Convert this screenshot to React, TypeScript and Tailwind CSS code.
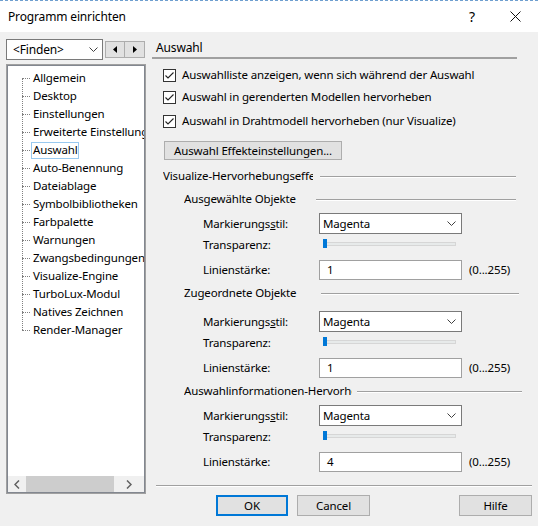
import React from "react";

const treeItems = [
  "Allgemein",
  "Desktop",
  "Einstellungen",
  "Erweiterte Einstellungen",
  "Auswahl",
  "Auto-Benennung",
  "Dateiablage",
  "Symbolbibliotheken",
  "Farbpalette",
  "Warnungen",
  "Zwangsbedingungen",
  "Visualize-Engine",
  "TurboLux-Modul",
  "Natives Zeichnen",
  "Render-Manager",
];

function Chevron() {
  return (
    <svg width="9" height="6" viewBox="0 0 9 6" className="shrink-0">
      <path d="M0.5 0.5 L4.5 4.5 L8.5 0.5" fill="none" stroke="#404040" strokeWidth="1" />
    </svg>
  );
}

function CheckBox({ label }: { label: string }) {
  return (
    <div className="flex items-center h-[16px] ml-[11px]">
      <svg width="13" height="13" viewBox="0 0 13 13" className="shrink-0">
        <rect x="0.5" y="0.5" width="12" height="12" fill="#fff" stroke="#333" />
        <path d="M2.5 6.5 L5 9 L10.5 3.5" fill="none" stroke="#222" strokeWidth="1.1" />
      </svg>
      <span className="ml-[6px] whitespace-nowrap">{label}</span>
    </div>
  );
}

function GroupHeading({
  text,
  left,
  labelWidth,
  gap,
  lineWidth,
}: {
  text: string;
  left: string;
  labelWidth: string;
  gap: string;
  lineWidth: string;
}) {
  return (
    <div className={`flex items-center h-[16px] ${left}`}>
      <span className={`${labelWidth} overflow-hidden whitespace-nowrap shrink-0`}>{text}</span>
      <div className={`${gap} ${lineWidth} h-[2px] border-t border-[#a0a0a0] bg-white mt-[2px]`} />
    </div>
  );
}

function FieldGroup({ value, top }: { value: string; top: string }) {
  return (
    <div className="flex flex-col">
      <div className={`flex items-center h-[21px] ${top}`}>
        <span className="w-[116px] ml-[51px] shrink-0">
          Markierungs<span className="underline">s</span>til:
        </span>
        <div className="w-[143px] h-[21px] bg-white border border-[#7a7a7a] flex items-center justify-between pl-[3px] pr-[5px]">
          <span>Magenta</span>
          <Chevron />
        </div>
      </div>
      <div className="flex items-center h-[16px] mt-[3px]">
        <span className="w-[120px] ml-[51px] shrink-0">Transparenz:</span>
        <div className="relative w-[133px] h-[4px] bg-[#e7eaea] border border-[#d6d6d6] mt-[-2px]">
          <div className="absolute left-[-1px] top-[-4px] w-[4px] h-[9px] bg-[#0078d7]" />
        </div>
      </div>
      <div className="flex items-center h-[20px] mt-[7px]">
        <span className="w-[116px] ml-[51px] shrink-0">Linienstärke:</span>
        <div className="w-[143px] h-[20px] bg-white border border-[#a0a0a0] flex items-center pl-[7px]">
          {value}
        </div>
        <span className="ml-[7px]">(0...255)</span>
      </div>
    </div>
  );
}

function Button({ label, primary, width }: { label: string; primary?: boolean; width: string }) {
  return (
    <div
      className={`${width} h-[21px] bg-[#e1e1e1] flex items-center justify-center ${
        primary ? "border-2 border-[#0078d7]" : "border border-[#adadad]"
      }`}
    >
      {label}
    </div>
  );
}

export default function App() {
  return (
    <div className="w-[538px] h-[526px] bg-[#f0f0f0] flex flex-col overflow-hidden text-[11.5px] tracking-[-0.15px] leading-[16px] text-black font-['Noto_Sans','Liberation_Sans',sans-serif]">
      {/* title bar */}
      <div className="h-[32px] bg-white border-t border-dashed border-[#6f9fcf] flex items-center shrink-0">
        <span className="ml-[8px] text-[12px]">Programm einrichten</span>
        <span className="ml-auto text-[14px] mr-[35px]">?</span>
        <svg width="11" height="11" viewBox="0 0 11 11" className="mr-[17px]">
          <path d="M0.5 0.5 L10.5 10.5 M10.5 0.5 L0.5 10.5" stroke="#111" strokeWidth="1" />
        </svg>
      </div>

      <div className="flex flex-1">
        {/* navigation column */}
        <div className="w-[152px] shrink-0 pl-[6px] pt-[7px] flex flex-col">
          <div className="flex items-start">
            <div className="w-[97px] h-[21px] bg-white border border-[#7a7a7a] flex items-center justify-between pl-[6px] pr-[4px]">
              <span className="text-[12px]">&lt;Finden&gt;</span>
              <Chevron />
            </div>
            <div className="ml-[2px] mt-[2px] flex h-[17px] border border-[#adadad] bg-[#e1e1e1]">
              <div className="w-[19px] flex items-center justify-center border-r border-[#adadad]">
                <svg width="4" height="7" viewBox="0 0 4 7">
                  <path d="M4 0 L0 3.5 L4 7 Z" fill="#000" />
                </svg>
              </div>
              <div className="w-[19px] flex items-center justify-center">
                <svg width="4" height="7" viewBox="0 0 4 7">
                  <path d="M0 0 L4 3.5 L0 7 Z" fill="#000" />
                </svg>
              </div>
            </div>
          </div>

          <div className="mt-[4px] w-[140px] h-[430px] border border-[#a0a0a0] bg-white">
            <div className="h-full border border-[#828790] flex flex-col">
              <div className="relative flex-1 overflow-hidden pt-[3px]">
                <div className="absolute left-[14px] top-[12px] h-[252px] border-l border-dotted border-[#808080]" />
                {treeItems.map((item) => (
                  <div key={item} className="flex items-center h-[18px] whitespace-nowrap">
                    <div className="ml-[14px] w-[8px] border-t border-dotted border-[#808080] shrink-0" />
                    {item === "Auswahl" ? (
                      <span className="ml-[1px] h-[17px] px-[1px] border border-[#99c9ef] flex items-center">
                        {item}
                      </span>
                    ) : (
                      <span className="ml-[3px]">{item}</span>
                    )}
                  </div>
                ))}
              </div>
              <div className="h-[16px] bg-[#f0f0f0] flex items-center shrink-0">
                <div className="w-[18px] flex items-center justify-center">
                  <svg width="6" height="9" viewBox="0 0 6 9">
                    <path d="M5 0.5 L1 4.5 L5 8.5" fill="none" stroke="#606060" strokeWidth="1.5" />
                  </svg>
                </div>
                <div className="w-[88px] h-[16px] bg-[#cdcdcd]" />
                <div className="flex-1 flex items-center justify-center">
                  <svg width="6" height="9" viewBox="0 0 6 9">
                    <path d="M1 0.5 L5 4.5 L1 8.5" fill="none" stroke="#606060" strokeWidth="1.5" />
                  </svg>
                </div>
              </div>
            </div>
          </div>
        </div>

        {/* settings page */}
        <div className="flex-1 flex flex-col">
          <div className="mt-[7px] h-[17px] pl-[4px] flex items-center text-[12px]">Auswahl</div>
          <div className="mt-[1px] w-[365px] h-[2px] bg-[#a0a0a0]" />

          <div className="mt-[8px]">
            <CheckBox label="Auswahlliste anzeigen, wenn sich während der Auswahl" />
          </div>
          <div className="mt-[6px]">
            <CheckBox label="Auswahl in gerenderten Modellen hervorheben" />
          </div>
          <div className="mt-[8px]">
            <CheckBox label="Auswahl in Drahtmodell hervorheben (nur Visualize)" />
          </div>

          <div className="mt-[12px] ml-[12px] w-[178px] h-[19px] bg-[#e1e1e1] border border-[#adadad] flex items-center justify-center">
            Auswahl Effekteinstellungen...
          </div>

          <div className="mt-[8px]">
            <GroupHeading
              text="Visualize-Hervorhebungseffekte"
              left="ml-[11px]"
              labelWidth="w-[150px]"
              gap="ml-[7px]"
              lineWidth="w-[196px]"
            />
          </div>
          <div className="mt-[7px]">
            <GroupHeading
              text="Ausgewählte Objekte"
              left="ml-[32px]"
              labelWidth="w-[132px]"
              gap="ml-0"
              lineWidth="w-[200px]"
            />
          </div>
          <FieldGroup value="1" top="mt-[6px]" />

          <div className="mt-[5px]">
            <GroupHeading
              text="Zugeordnete Objekte"
              left="ml-[32px]"
              labelWidth="w-[137px]"
              gap="ml-0"
              lineWidth="w-[198px]"
            />
          </div>
          <FieldGroup value="1" top="mt-[10px]" />

          <div className="mt-[5px]">
            <GroupHeading
              text="Auswahlinformationen-Hervorhebung"
              left="ml-[32px]"
              labelWidth="w-[168px]"
              gap="ml-[5px]"
              lineWidth="w-[165px]"
            />
          </div>
          <FieldGroup value="4" top="mt-[6px]" />

          <div className="mt-[13px] ml-[4px] w-[376px] h-[2px] border-t border-[#a0a0a0] bg-white" />

          <div className="mt-[8px] flex">
            <div className="ml-[64px]">
              <Button label="OK" primary width="w-[72px]" />
            </div>
            <div className="ml-[9px]">
              <Button label="Cancel" width="w-[73px]" />
            </div>
            <div className="ml-[89px]">
              <Button label="Hilfe" width="w-[73px]" />
            </div>
          </div>
        </div>
      </div>
    </div>
  );
}
